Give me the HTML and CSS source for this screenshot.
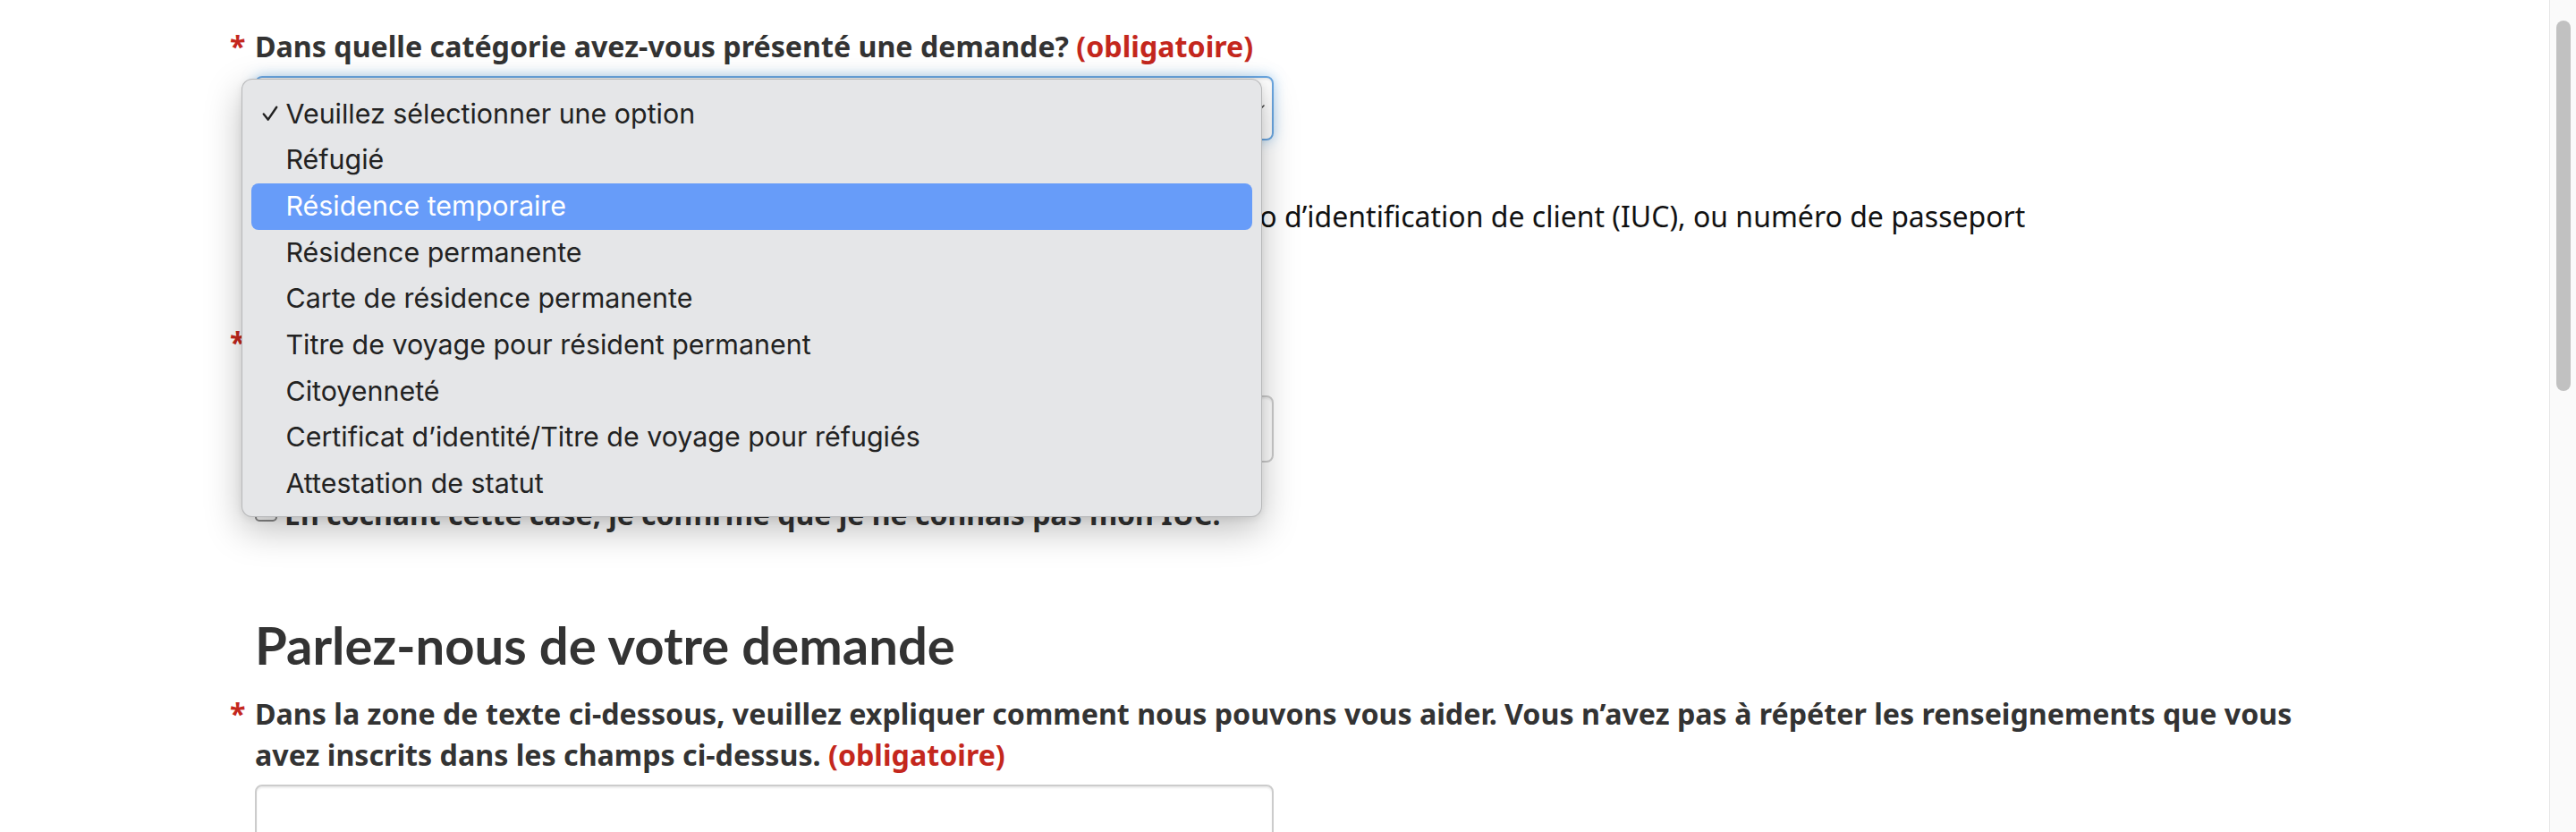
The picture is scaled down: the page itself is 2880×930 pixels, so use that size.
FILE: index.html
```html
<!DOCTYPE html>
<html lang="fr">
<head>
<meta charset="utf-8">
<title>Formulaire</title>
<link rel="stylesheet" href="styles.css">
</head>
<body>
<div class="page">
  <main class="content">
    <form class="form">
      <label class="label"><span class="req">*</span>Dans quelle catégorie avez-vous présenté une demande? <span class="oblig">(obligatoire)</span></label>
      <div class="select-wrap">
        <div class="select">
          <span class="select-value">Veuillez sélectionner une option</span>
          <svg class="chevron" viewBox="0 0 14 8" aria-hidden="true"><polyline points="1,1 7,7 13,1" fill="none" stroke="#444" stroke-width="1.6" stroke-linecap="round" stroke-linejoin="round"/></svg>
        </div>
        <ul class="popup">
          <li class="opt"><span class="mark"><svg class="tick" viewBox="0 0 18 18" aria-hidden="true"><polyline points="2.5,9.5 7,15 15.5,2.5" fill="none" stroke="#222" stroke-width="2.2" stroke-linecap="round" stroke-linejoin="round"/></svg></span><span>Veuillez sélectionner une option</span></li>
          <li class="opt"><span class="mark"></span><span>Réfugié</span></li>
          <li class="opt active"><span class="mark"></span><span>Résidence temporaire</span></li>
          <li class="opt"><span class="mark"></span><span>Résidence permanente</span></li>
          <li class="opt"><span class="mark"></span><span>Carte de résidence permanente</span></li>
          <li class="opt"><span class="mark"></span><span>Titre de voyage pour résident permanent</span></li>
          <li class="opt"><span class="mark"></span><span>Citoyenneté</span></li>
          <li class="opt"><span class="mark"></span><span>Certificat d’identité/Titre de voyage pour réfugiés</span></li>
          <li class="opt"><span class="mark"></span><span>Attestation de statut</span></li>
        </ul>
      </div>
      <p class="hint">Vous pouvez utiliser votre numéro de demande, numéro de dossier, numéro d’identification de client (IUC), ou numéro de passeport</p>
      <label class="label label-gap"><span class="req">*</span>Numéro de demande ou IUC <span class="oblig">(obligatoire)</span></label>
      <div class="input"></div>
      <div class="check-row"><span class="box"></span><span>En cochant cette case, je confirme que je ne connais pas mon IUC.</span></div>
      <h2 class="heading">Parlez-nous de votre demande</h2>
      <label class="label label-long"><span class="req">*</span>Dans la zone de texte ci-dessous, veuillez expliquer comment nous pouvons vous aider. Vous n’avez pas à répéter les renseignements que vous avez inscrits dans les champs ci-dessus. <span class="oblig">(obligatoire)</span></label>
      <div class="textarea"></div>
    </form>
  </main>
  <aside class="scrollbar"><div class="thumb"></div></aside>
</div>
</body>
</html>
```

FILE: styles.css
```css
html, body {
  margin: 0;
  height: 100%;
  overflow: hidden;
  background: #fff;
}
body {
  font-family: "Noto Sans", "Open Sans", sans-serif;
  color: #333;
}
.page {
  display: flex;
  height: 930px;
}
.content {
  flex: 1;
  min-width: 0;
}
.form {
  width: 2310px;
  margin-left: 285px;
  padding-top: 29px;
}
.label {
  display: block;
  font-weight: 700;
  font-size: 32.2px;
  line-height: 46px;
  margin-bottom: 10px;
}
.req {
  display: inline-block;
  width: 28px;
  margin-left: -28px;
  color: #c4271d;
}
.oblig {
  color: #c4271d;
}
.select-wrap {
  position: relative;
  width: 1139px;
}
.select {
  box-sizing: border-box;
  height: 72px;
  border: 2px solid #6aa6e0;
  border-radius: 8px;
  box-shadow: inset 0 2px 2px rgba(0,0,0,.075), 0 0 14px rgba(102,175,233,.55);
  display: flex;
  align-items: center;
  justify-content: space-between;
  padding: 0 8px 0 22px;
  font-size: 32px;
  color: #555;
}
.chevron {
  width: 14px;
  height: 8px;
}
.popup {
  position: absolute;
  top: 3px;
  left: -15.5px;
  width: 1141px;
  box-sizing: border-box;
  margin: 0;
  padding: 12.5px 10px 10.5px;
  list-style: none;
  background: #e5e6e8;
  border: 1px solid rgba(0,0,0,.2);
  border-radius: 12px;
  box-shadow: 0 14px 40px rgba(0,0,0,.25), 0 2px 8px rgba(0,0,0,.08);
  font-family: Inter, "Noto Sans", sans-serif;
  font-size: 30.4px;
  color: #222;
  z-index: 2;
}
.opt {
  display: flex;
  align-items: center;
  height: 51.7px;
  line-height: 51.7px;
  border-radius: 8px;
  white-space: nowrap;
}
.opt.active {
  background: #679cf9;
  color: #fff;
}
.mark {
  box-sizing: border-box;
  width: 39px;
  flex-shrink: 0;
  padding-left: 11px;
  display: flex;
  align-items: center;
}
.tick {
  width: 20px;
  height: 20px;
}
.hint {
  margin: 61.75px 0 0;
  font-size: 32px;
  line-height: 46px;
  color: #111;
  white-space: nowrap;
}
.label-gap {
  margin-top: 95.25px;
  margin-bottom: 36px;
}
.input {
  box-sizing: border-box;
  width: 1139px;
  height: 75px;
  border: 2px solid #ccc;
  border-radius: 8px;
  box-shadow: inset 0 2px 2px rgba(0,0,0,.075);
}
.check-row {
  display: flex;
  align-items: flex-start;
  gap: 8px;
  margin-top: 35px;
  font-weight: 700;
  font-size: 32px;
  line-height: 46px;
}
.box {
  box-sizing: border-box;
  width: 25px;
  height: 25px;
  margin-top: 6px;
  border: 2px solid #8a8a8a;
  border-radius: 5px;
  background: #fff;
}
.heading {
  margin: 90.7px 0 0;
  font-family: Lato, sans-serif;
  font-weight: 700;
  font-size: 58px;
  line-height: 64px;
  color: #333;
}
.label-long {
  margin-top: 22px;
}
.textarea {
  box-sizing: border-box;
  width: 1139px;
  height: 200px;
  border: 2px solid #ccc;
  border-radius: 8px;
  box-shadow: inset 0 2px 2px rgba(0,0,0,.075);
}
.scrollbar {
  width: 30px;
  flex-shrink: 0;
  box-sizing: border-box;
  background: #fafafa;
  border-left: 1px solid #e6e6e6;
  padding: 23px 0 0 7px;
}
.thumb {
  width: 16px;
  height: 414px;
  border-radius: 8px;
  background: #c1c1c1;
}
```
